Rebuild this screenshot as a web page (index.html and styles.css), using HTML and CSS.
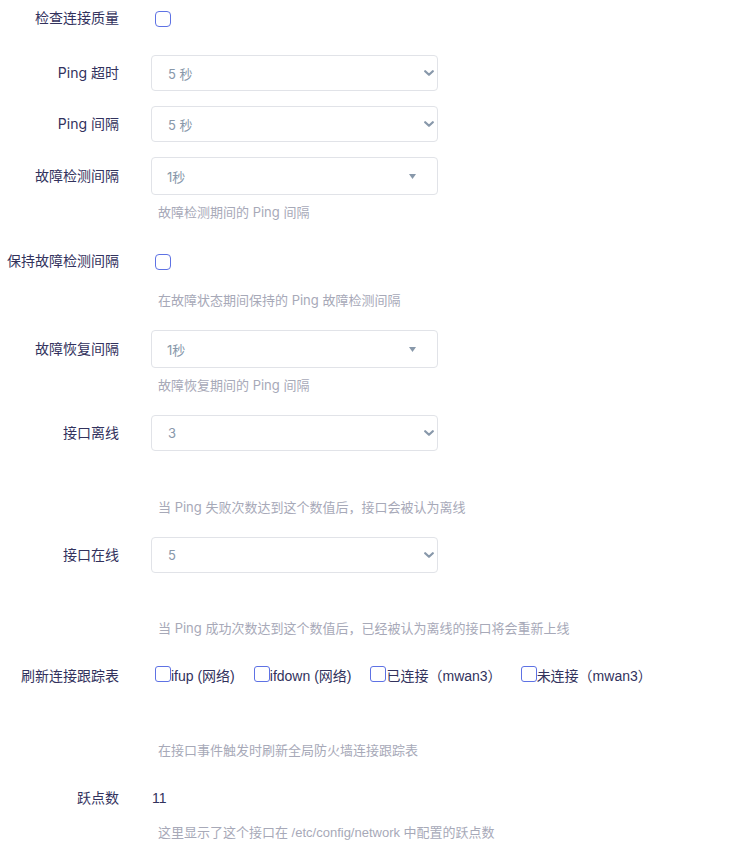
FILE: index.html
```html
<!DOCTYPE html>
<html lang="zh-CN">
<head>
<meta charset="utf-8">
<title>MWAN 接口监控</title>
<link rel="stylesheet" href="styles.css">
</head>
<body>
<div class="form">

  <div class="row row-check first">
    <div class="label">检查连接质量</div>
    <div class="field"><span class="cbox"></span></div>
  </div>

  <div class="row row-select gap15">
    <div class="label lh36">Ping 超时</div>
    <div class="field">
      <div class="select"><span>5 秒</span>
        <svg class="chev" width="10" height="6" viewBox="0 0 10 6"><path d="M1.2 1.2 L5 4.8 L8.8 1.2" fill="none" stroke="#8898aa" stroke-width="2.2" stroke-linecap="round" stroke-linejoin="round"/></svg>
      </div>
    </div>
  </div>

  <div class="row row-select gap15">
    <div class="label lh36">Ping 间隔</div>
    <div class="field">
      <div class="select"><span>5 秒</span>
        <svg class="chev" width="10" height="6" viewBox="0 0 10 6"><path d="M1.2 1.2 L5 4.8 L8.8 1.2" fill="none" stroke="#8898aa" stroke-width="2.2" stroke-linecap="round" stroke-linejoin="round"/></svg>
      </div>
    </div>
  </div>

  <div class="row mb29">
    <div class="label lh38">故障检测间隔</div>
    <div class="field">
      <div class="select tall"><span class="v1">1秒</span>
        <svg class="tri" width="7" height="5" viewBox="0 0 7 5"><path d="M0 0 H7 L3.5 5 Z" fill="#8898aa"/></svg>
      </div>
      <div class="desc mt7">故障检测期间的 Ping 间隔</div>
    </div>
  </div>

  <div class="row row-check mb20">
    <div class="label">保持故障检测间隔</div>
    <div class="field">
      <span class="cbox"></span>
      <div class="desc mt20">在故障状态期间保持的 Ping 故障检测间隔</div>
    </div>
  </div>

  <div class="row mb20">
    <div class="label lh38">故障恢复间隔</div>
    <div class="field">
      <div class="select tall"><span class="v1">1秒</span>
        <svg class="tri" width="7" height="5" viewBox="0 0 7 5"><path d="M0 0 H7 L3.5 5 Z" fill="#8898aa"/></svg>
      </div>
      <div class="desc mt7">故障恢复期间的 Ping 间隔</div>
    </div>
  </div>

  <div class="row mb20">
    <div class="label lh36">接口离线</div>
    <div class="field">
      <div class="select"><span>3</span>
        <svg class="chev" width="10" height="6" viewBox="0 0 10 6"><path d="M1.2 1.2 L5 4.8 L8.8 1.2" fill="none" stroke="#8898aa" stroke-width="2.2" stroke-linecap="round" stroke-linejoin="round"/></svg>
      </div>
      <div class="desc mt46">当 Ping 失败次数达到这个数值后，接口会被认为离线</div>
    </div>
  </div>

  <div class="row mb28">
    <div class="label lh36">接口在线</div>
    <div class="field">
      <div class="select"><span>5</span>
        <svg class="chev" width="10" height="6" viewBox="0 0 10 6"><path d="M1.2 1.2 L5 4.8 L8.8 1.2" fill="none" stroke="#8898aa" stroke-width="2.2" stroke-linecap="round" stroke-linejoin="round"/></svg>
      </div>
      <div class="desc mt45">当 Ping 成功次数达到这个数值后，已经被认为离线的接口将会重新上线</div>
    </div>
  </div>

  <div class="row mb28">
    <div class="label">刷新连接跟踪表</div>
    <div class="field wide">
      <div class="checks">
        <label class="opt"><span class="cbox sq"></span>ifup (网络)</label>
        <label class="opt"><span class="cbox sq"></span>ifdown (网络)</label>
        <label class="opt"><span class="cbox sq"></span>已连接（mwan3）</label>
        <label class="opt"><span class="cbox sq"></span>未连接（mwan3）</label>
      </div>
      <div class="desc mt54">在接口事件触发时刷新全局防火墙连接跟踪表</div>
    </div>
  </div>

  <div class="row">
    <div class="label">跃点数</div>
    <div class="field wide">
      <div class="value">11</div>
      <div class="desc mt15 arial">这里显示了这个接口在 /etc/config/network 中配置的跃点数</div>
    </div>
  </div>

</div>
</body>
</html>
```

FILE: styles.css
```css
html, body {
  margin: 0;
  padding: 0;
  background: #ffffff;
}

body {
  font-family: "Inter", "Noto Sans CJK SC", sans-serif;
  color: #32325d;
  font-size: 14px;
}

.form {
  padding-top: 8px;
  width: 729px;
}

.row {
  display: grid;
  grid-template-columns: 120px 1fr;
  column-gap: 31px;
  align-items: start;
}

.label {
  text-align: right;
  font-size: 14px;
  line-height: 20px;
  color: #32325d;
  padding-right: 1px;
  white-space: nowrap;
}

.lh36 { line-height: 36px; }
.lh38 { line-height: 38px; }

.field {
  width: 287px;
  display: flex;
  flex-direction: column;
  align-items: flex-start;
}

.field.wide { width: 560px; }

.first { margin-bottom: 27px; }
.gap15 { margin-bottom: 15px; }
.mb20 { margin-bottom: 20px; }
.mb28 { margin-bottom: 28px; }
.mb29 { margin-bottom: 29px; }

.cbox {
  display: inline-block;
  box-sizing: border-box;
  width: 16px;
  height: 16px;
  margin-top: 3px;
  margin-left: 4px;
  border: 1.5px solid #5e72e4;
  border-radius: 4px;
  background: #fff;
  flex: none;
}

.select {
  box-sizing: border-box;
  width: 287px;
  height: 36px;
  border: 1px solid #e1e3e8;
  border-radius: 4px;
  display: flex;
  align-items: center;
  justify-content: space-between;
  padding: 0 3px 0 16px;
  font-size: 13px;
  color: #8898aa;
  background: #fff;
}

.select.tall {
  height: 38px;
  padding-right: 21px;
}

.select .v1 { margin-left: -1px; }

.chev { display: block; }
.tri { display: block; margin-top: 1px; }

.desc {
  font-size: 13px;
  line-height: 20px;
  color: #a7a9b8;
  padding-left: 7px;
  white-space: nowrap;
}

.desc.arial {
  font-family: "Liberation Sans", "Noto Sans CJK SC", sans-serif;
}

.mt7 { margin-top: 7px; }
.mt15 { margin-top: 15px; }
.mt20 { margin-top: 20px; }
.mt45 { margin-top: 45px; }
.mt46 { margin-top: 46px; }
.mt54 { margin-top: 54px; }

.checks {
  display: flex;
  align-items: flex-start;
  padding-left: 4px;
  height: 20px;
  font-family: "Liberation Sans", "Noto Sans CJK SC", sans-serif;
  font-size: 14px;
  line-height: 20px;
  color: #32325d;
  white-space: nowrap;
}

.opt {
  display: flex;
  align-items: flex-start;
  margin-right: 19px;
}

.cbox.sq {
  width: 16px;
  height: 16px;
  margin-top: 0;
  margin-left: 0;
  border-radius: 3px;
}

.value {
  font-family: "Liberation Sans", sans-serif;
  font-size: 14px;
  line-height: 20px;
  color: #32325d;
  padding-left: 1px;
}
```
